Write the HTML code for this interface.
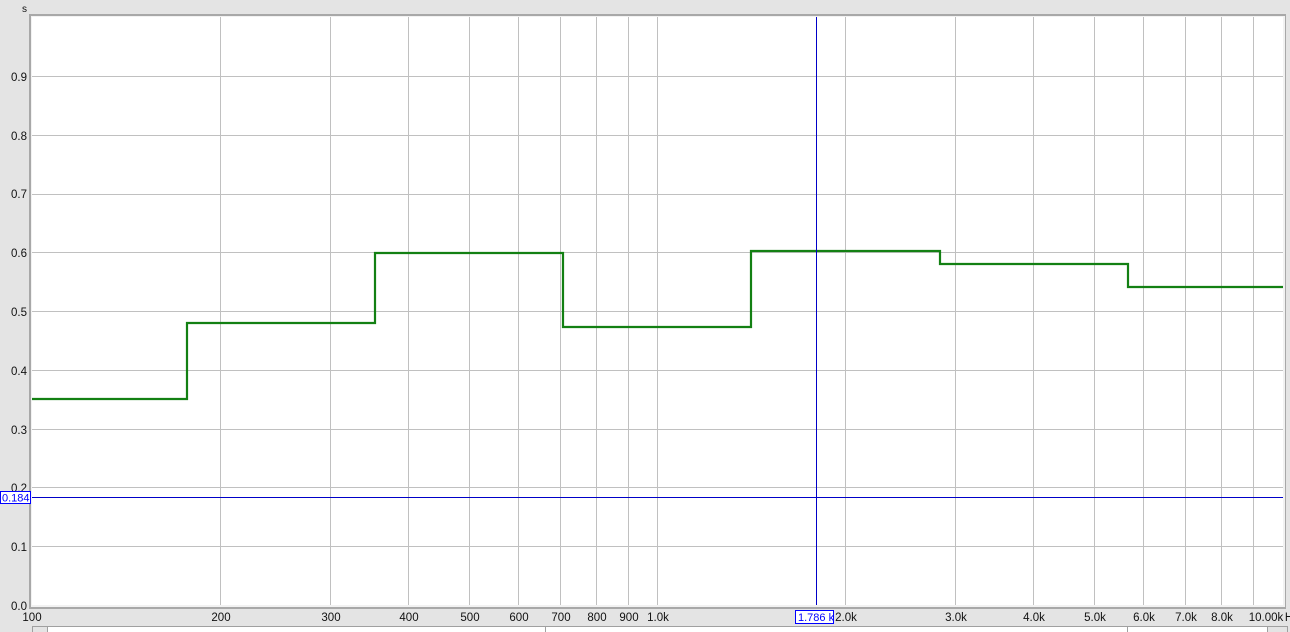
<!DOCTYPE html>
<html><head><style>
html,body{margin:0;padding:0;background:#e4e4e4;}
svg{display:block;font-family:"Liberation Sans",sans-serif;}
</style></head><body>
<svg width="1290" height="632" viewBox="0 0 1290 632" xmlns="http://www.w3.org/2000/svg">
<rect width="1290" height="632" fill="#e4e4e4"/>
<rect x="29" y="14" width="1257" height="595" fill="#a8a8a8"/>
<rect x="31" y="16" width="1254" height="591" fill="#f2f2f2"/>
<rect x="32" y="17" width="1251" height="588" fill="#fff"/>
<g stroke="#c0c0c0" stroke-width="1">
<path d="M32 546.5H1283M32 487.5H1283M32 429.5H1283M32 370.5H1283M32 311.5H1283M32 252.5H1283M32 194.5H1283M32 135.5H1283M32 76.5H1283"/>
<path d="M220.5 17V605M330.5 17V605M408.5 17V605M469.5 17V605M518.5 17V605M560.5 17V605M596.5 17V605M628.5 17V605M657.5 17V605M845.5 17V605M955.5 17V605M1033.5 17V605M1094.5 17V605M1143.5 17V605M1185.5 17V605M1221.5 17V605M1253.5 17V605"/>
</g>
<path d="M32 399H187V323H375V253H563V327H751V251H940V264H1128V287H1283" fill="none" stroke="#138013" stroke-width="2.2"/>
<path d="M816.5 17V605M32 497.5H1283" stroke="#0000c8" stroke-width="1" shape-rendering="crispEdges"/>
<g font-size="11.5" fill="#111" text-anchor="end">
<text x="27" y="12" font-size="10">s</text>
<text x="27" y="81">0.9</text><text x="27" y="140">0.8</text><text x="27" y="198">0.7</text>
<text x="27" y="257">0.6</text><text x="27" y="316">0.5</text><text x="27" y="375">0.4</text>
<text x="27" y="434">0.3</text><text x="27" y="492">0.2</text><text x="27" y="551">0.1</text>
<text x="27" y="610">0.0</text>
</g>
<rect x="0.5" y="491.5" width="30" height="12" fill="#fff" stroke="#0000ff"/>
<text x="2" y="501.5" font-size="11" fill="#0000ff">0.184</text>
<g font-size="11.5" fill="#111" text-anchor="middle">
<text x="32" y="621">100</text><text x="221" y="621">200</text><text x="331" y="621">300</text>
<text x="409" y="621">400</text><text x="470" y="621">500</text><text x="519" y="621">600</text>
<text x="561" y="621">700</text><text x="597" y="621">800</text><text x="629" y="621">900</text>
<text x="658" y="621">1.0k</text><text x="846" y="621">2.0k</text><text x="956" y="621">3.0k</text>
<text x="1034" y="621">4.0k</text><text x="1095" y="621">5.0k</text><text x="1144" y="621">6.0k</text>
<text x="1186" y="621">7.0k</text><text x="1222" y="621">8.0k</text><text x="1266" y="621">10.00k</text>
<text x="1289" y="621">H</text>
</g>
<rect x="795.5" y="610.5" width="38" height="13" fill="#fff" stroke="#0000ff"/>
<text x="798" y="621" font-size="11" fill="#0000ff">1.786 k</text>
<rect x="32.5" y="626.5" width="1235" height="8" fill="#fff" stroke="#a0a0a0"/>
<rect x="32.5" y="626.5" width="15" height="8" fill="#e4e4e4" stroke="#a0a0a0"/>
<rect x="1267.5" y="626.5" width="20" height="8" fill="#e4e4e4" stroke="#a0a0a0"/>
<path d="M545.5 626V632M1127.5 626V632" stroke="#a0a0a0"/>
</svg>
</body></html>
